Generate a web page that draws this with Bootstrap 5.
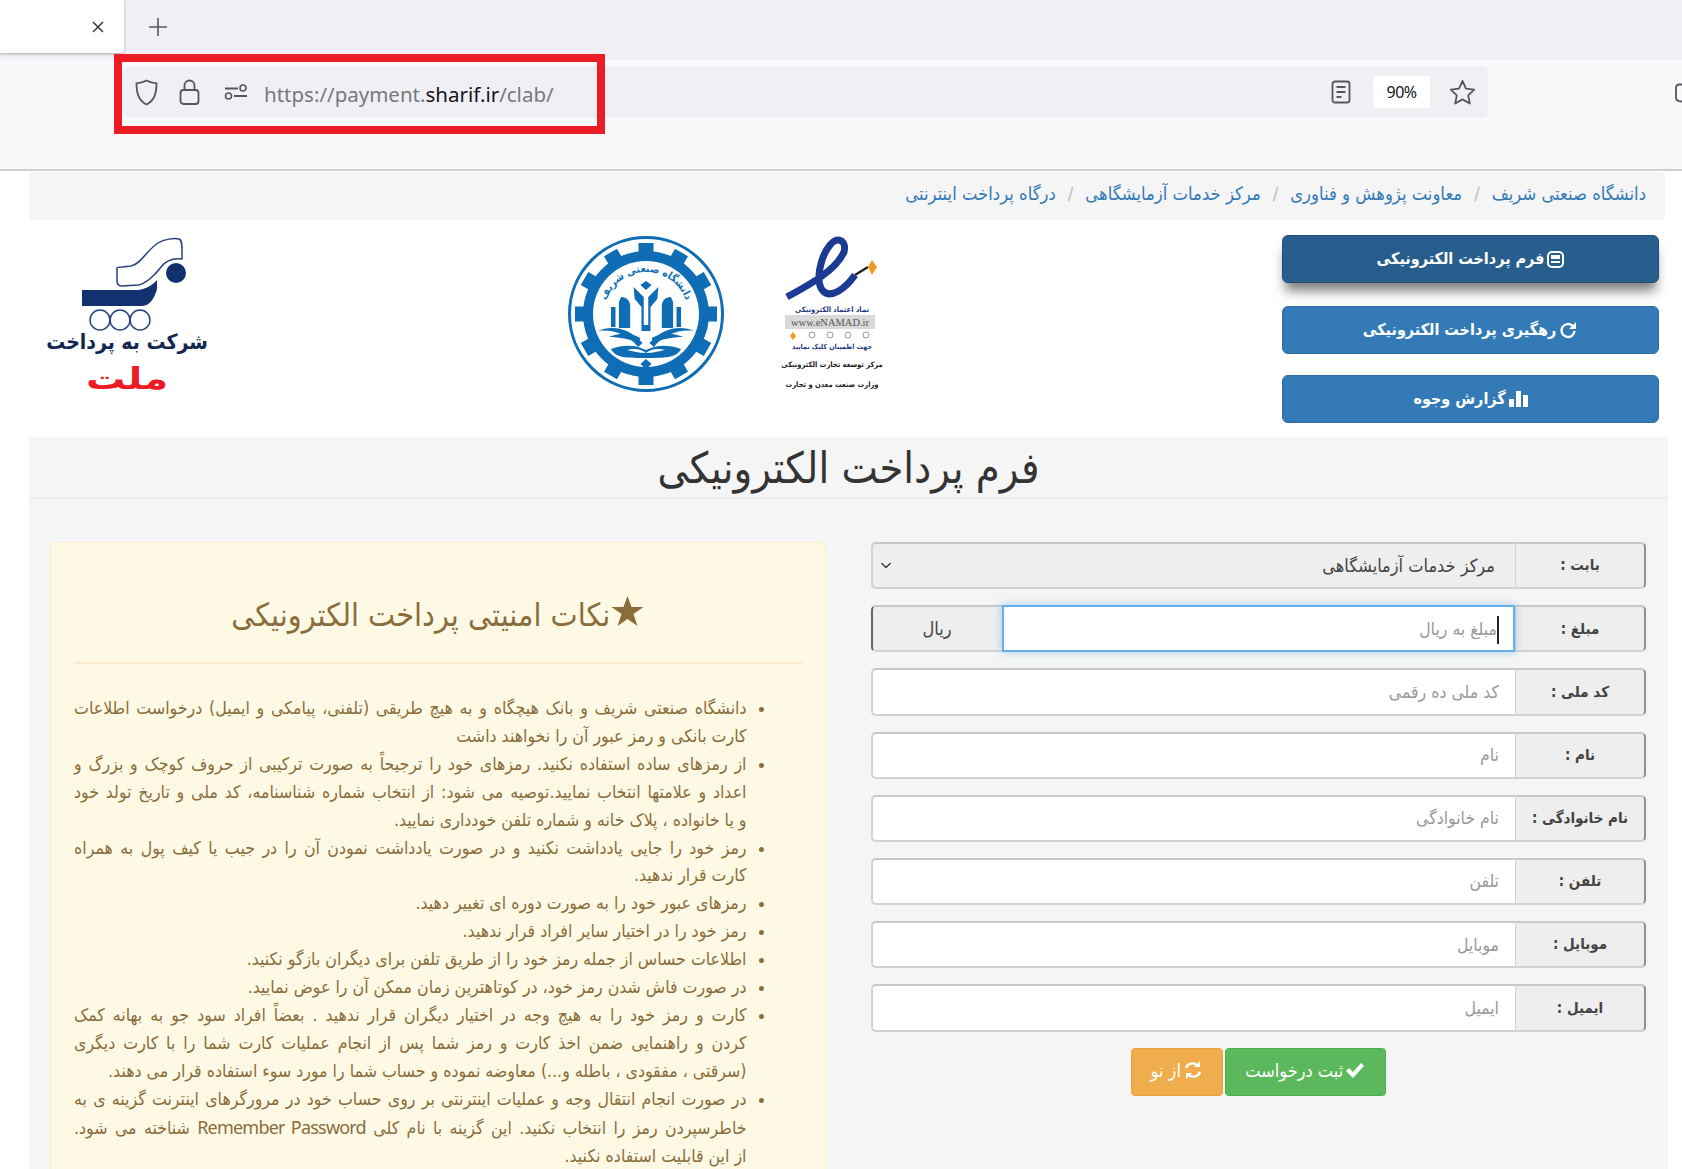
<!DOCTYPE html>
<html lang="fa">
<head>
  <meta charset="UTF-8" />
  <meta name="viewport" content="width=device-width, initial-scale=1.0"/>
  <title>فرم پرداخت الکترونیکی</title>
  <link href="https://cdn.jsdelivr.net/npm/bootstrap@5.3.0/dist/css/bootstrap.min.css" rel="stylesheet"/>
  <style>
    html, body { height: 100%; overflow: hidden; background: #fff; }
    body { font-family: "DejaVu Sans Condensed", "DejaVu Sans", sans-serif; font-stretch: condensed; font-size: 15px; color: #555; }

    /* browser chrome */
    .tab-strip { height: 60px; background: #f0f0f4; }
    .tab-active { width: 124px; height: 53px; background: #fff; border-bottom-right-radius: 4px; box-shadow: 0 1px 3px rgba(0,0,0,.3); padding-right: 19px; }
    .tab-new { width: 68px; height: 53px; }
    .tool-bar { height: 111px; background: #f9f9fb; border-bottom: 2px solid #cfcfd2; padding: 6px 0 0 122px; }
    .url-bar { width: 1366px; height: 52px; background: #f0f0f4; border-radius: 6px; padding: 0 12px; }
    .url-text { font-family: "Noto Sans", "Open Sans", sans-serif; font-size: 20.5px; color: #77777f; margin-left: 16px; padding-top: 4px; }
    .url-text b { font-weight: 400; color: #15141a; }
    .zoom-pill { width: 57px; height: 32px; background: #fff; border-radius: 4px; font-family: "Noto Sans", sans-serif; font-size: 16px; letter-spacing: -.6px; color: #15141a; margin: 0 19px 0 22px; }
    .red-frame { position: absolute; left: 114px; top: 54px; width: 491px; height: 80px; border: 8px solid #ed1c24; }
    .side-icon { position: absolute; right: 0; top: 83px; }
    .icon-shield { margin-right: 20px; }
    .icon-lock { margin-right: 24px; }

    .page-wrap { padding: 1px 14px 0 29px; }
    .crumb-bar { height: 48px; background: #f5f5f5; border-radius: 4px; margin: 0 3px 0 0; padding: 0 19px; }
    .crumb-bar .breadcrumb-item { font-size: 18.3px; line-height: 1; padding-bottom: 3px; }
    .crumb-bar .breadcrumb-item a { color: #337ab7; text-decoration: none; }
    .crumb-bar .breadcrumb-item + .breadcrumb-item { padding-left: 0; padding-right: 12px; }
    .crumb-bar .breadcrumb-item + .breadcrumb-item::before { float: right; padding-right: 0; padding-left: 12px; color: #bbb; }

    /* logos and side menu */
    .head-row { height: 217px; padding-right: 9px; }
    .pay-menu { width: 377px; padding-top: 15px; }
    .menu-btn { display: flex; align-items: center; justify-content: center; gap: 3px; width: 100%; height: 48px; margin-bottom: 21px; background: #337ab7; border: 1px solid #2e6da4; color: #fff; font-size: 16px; font-weight: 700; }
    .menu-btn:hover { background: #337ab7; color: #fff; }
    .menu-btn.is-current { margin-bottom: 23px; background: #285e8e; border-color: #204d74; box-shadow: 0 11px 12px -3px rgba(0,0,0,.5); }
    .seal-enamad { margin: 17px 404px 0 0; width: 93px; height: 156px; overflow: visible; }
    .seal-sharif { margin: 15px 60px 0 0; width: 158px; height: 158px; }
    .seal-mellat { margin: 17px auto 0 17px; width: 162px; height: 153px; overflow: visible; }

    /* main panel */
    .main-panel { height: 740px; background: #f5f5f5; overflow: hidden; }
    .panel-head { height: 62px; padding-top: 3px; border-bottom: 2px solid #ededed; }
    .panel-head h2 { font-size: 43px; font-weight: 400; color: #333; margin: 0; }
    .panel-col { padding: 43px 22px 0 22px; }
    .panel-col.is-tips { padding: 43px 23px 0 21px; }

    .pay-group { height: 47.2px; margin-bottom: 16px; }
    .input-group.pay-group > * { margin: 0 !important; font-size: 15px; border: 2px solid #d2d2d2; border-top-color: #c8c8c8; border-radius: 0 !important; }
    .input-group.pay-group > .pay-label { width: 131px; justify-content: center; background: #eee; color: #444; font-weight: 700; border-left-width: 1px; border-top-right-radius: 5px !important; border-bottom-right-radius: 5px !important; border-right-color: #8f8f8f; }
    .input-group.pay-group > .form-control,
    .input-group.pay-group > .form-select { border-right: 0; border-top-left-radius: 5px !important; border-bottom-left-radius: 5px !important; padding: 0 16px 0 0; font-size: 17.5px; color: #444; box-shadow: none; }
    .input-group.pay-group > .form-control::placeholder { color: #999; }
    .input-group.pay-group > .form-select { padding-right: 20px; font-size: 18px; background-color: #eee; opacity: 1; background-position: left 6px center; background-size: 14px 11px; }
    .input-group.pay-group > .form-control.has-focus { border: 2px solid #66afe9; border-radius: 0 !important; box-shadow: 0 0 8px rgba(102,175,233,.6); z-index: 3; }
    .input-group.pay-group > .unit-label { width: 131px; justify-content: center; background: #eee; color: #444; font-size: 18px; border-right: 0; border-top-left-radius: 5px !important; border-bottom-left-radius: 5px !important; border-left-color: #666; }
    .input-group.pay-group > .text-caret { position: absolute; right: 147px; top: 11px; width: 2px; height: 28px; padding: 0; background: #222; border: 0; z-index: 4; }

    .act-row { gap: 2px; }
    .act-btn { height: 48px; display: flex; align-items: center; justify-content: center; gap: 2px; padding: 0 0 3px; color: #fff; font-size: 18px; font-weight: 400; border-radius: 4px; }
    .act-send { width: 161px; background: #5cb85c; border-color: #4cae4c; }
    .act-reset { width: 92px; background: #f0ad4e; border-color: #eea236; }
    .act-send:hover { background: #5cb85c; color: #fff; }
    .act-reset:hover { background: #f0ad4e; color: #fff; }

    .tips-box { height: 700px; margin: 0; padding: 24px 23px; background: #fef9e5; border: 1px solid #faebcc; border-radius: 5px; color: #8a6d3b; }
    .tips-title { display: flex; align-items: flex-start; justify-content: center; gap: 1px; margin: 29px 0 0; font-size: 32px; font-weight: 400; height: 66px; color: #8a6d3b; }
    .tips-rule { margin: 0 0 31px; border: 0; border-top: 2px solid #faebcc; opacity: 1; }
    .tips-list { margin: 0; padding: 0 55px 0 0; font-size: 17.6px; line-height: 27.9px; }
    .tip-line { display: block; white-space: nowrap; }
    .tip-line.is-full { text-align: justify; text-align-last: justify; }
    .tips-list bdi { font-family: "Noto Sans", sans-serif; font-size: 18px; letter-spacing: -.8px; }
    .seal-text { font-family: "DejaVu Sans Condensed", "DejaVu Sans", sans-serif; }
  </style>
</head>
<body>
  <!-- نوار مرورگر -->
  <header class="position-relative">
    <div class="tab-strip d-flex align-items-start">
      <div class="tab-active d-flex align-items-center justify-content-end">
        <svg width="14" height="14" viewBox="0 0 14 14"><path d="M2 2l10 10M12 2L2 12" stroke="#3a3a3f" stroke-width="1.5" fill="none"/></svg>
      </div>
      <div class="tab-new d-flex align-items-center justify-content-center">
        <svg width="20" height="20" viewBox="0 0 20 20"><path d="M10 1v18M1 10h18" stroke="#55555b" stroke-width="1.6" fill="none"/></svg>
      </div>
    </div>
    <div class="tool-bar">
      <div class="url-bar d-flex align-items-center">
        <svg width="25" height="27" viewBox="0 0 25 27" class="icon-shield"><path d="M12.500 1.500c3 1.800 6 2.600 10 2.800 0 10-2 17-10 21.200C4.500 21.300 2.500 14.300 2.500 4.300c4-.2 7-1 10-2.800z" fill="none" stroke="#55555b" stroke-width="1.800"/></svg>
        <svg width="21" height="26" viewBox="0 0 21 26" class="icon-lock"><rect x="1.500" y="11" width="18" height="14" rx="3" fill="none" stroke="#55555b" stroke-width="1.800"/><path d="M5.500 11V6.500a5 5 0 0 1 10 0V11" fill="none" stroke="#55555b" stroke-width="1.800"/></svg>
        <svg width="24" height="16" viewBox="0 0 24 16"><path d="M1 4.500h13M10 12h13" stroke="#55555b" stroke-width="1.800"/><circle cx="19" cy="4" r="3" fill="none" stroke="#55555b" stroke-width="1.600"/><circle cx="4.500" cy="12" r="3" fill="none" stroke="#55555b" stroke-width="1.600"/></svg>
        <span class="url-text">https://payment.<b>sharif.ir</b>/clab/</span>
        <span class="flex-grow-1"></span>
        <svg width="20" height="24" viewBox="0 0 20 24"><rect x="1.500" y="1.500" width="17" height="21" rx="2.500" fill="none" stroke="#55555b" stroke-width="1.800"/><path d="M5.500 7h9M5.500 12h9M5.500 17h5" stroke="#55555b" stroke-width="1.800"/></svg>
        <span class="zoom-pill d-flex align-items-center justify-content-center">90%</span>
        <svg width="27" height="26" viewBox="0 0 27 26"><path d="M13.500 2l3.500 7.600 8.200 1-6 5.700 1.600 8.200-7.300-4.100-7.300 4.100 1.600-8.200-6-5.700 8.200-1z" fill="none" stroke="#55555b" stroke-width="1.800" stroke-linejoin="round"/></svg>
      </div>
    </div>
    <div class="red-frame"></div>
    <svg class="side-icon" width="7" height="20" viewBox="0 0 7 20"><path d="M7 1.500H4a3 3 0 0 0-3 3v10c0 2 2 4 6 4" fill="none" stroke="#55555b" stroke-width="1.800"/></svg>
  </header>

  <div class="page-wrap" dir="rtl">
    <nav class="crumb-bar d-flex align-items-center">
      <ol class="breadcrumb mb-0">
        <li class="breadcrumb-item"><a href="#">دانشگاه صنعتی شریف</a></li>
        <li class="breadcrumb-item"><a href="#">معاونت پژوهش و فناوری</a></li>
        <li class="breadcrumb-item"><a href="#">مرکز خدمات آزمایشگاهی</a></li>
        <li class="breadcrumb-item"><a href="#">درگاه پرداخت اینترنتی</a></li>
      </ol>
    </nav>

    <div class="head-row d-flex align-items-start">
      <div class="pay-menu">
        <a href="#" class="btn menu-btn is-current">
          <svg width="17" height="17" viewBox="0 0 17 17"><rect x="1" y="1" width="15" height="15" rx="4" fill="none" stroke="#fff" stroke-width="2"/><rect x="4" y="4" width="9" height="4" fill="#fff"/><path d="M4 11h9" stroke="#fff" stroke-width="2"/></svg>
          فرم پرداخت الکترونیکی
        </a>
        <a href="#" class="btn menu-btn">
          <svg width="19" height="19" viewBox="0 0 19 19"><path d="M15.500 10a6.500 6.500 0 1 1-2-5.200" fill="none" stroke="#fff" stroke-width="2.400"/><path d="M17 1v7h-7z" fill="#fff"/></svg>
          رهگیری پرداخت الکترونیکی
        </a>
        <a href="#" class="btn menu-btn">
          <svg width="19" height="16" viewBox="0 0 19 16"><path d="M0 8h5v8H0zM7 0h5v16H7zM14 4h5v12h-5z" fill="#fff"/></svg>
          گزارش وجوه
        </a>
      </div>

      <svg class="seal-enamad" viewBox="0 0 93 156">
        <path d="M2 60C20 50 50 35 59 15 62 3 52-1 45 8 35 20 30 45 38 54c8 8 22-2 32-16" fill="none" stroke="#1a3a94" stroke-width="7"/>
        <path d="M70 38l13-8" stroke="#222" stroke-width="2.500"/>
        <path d="M87 23l5 7-5 8-4-8z" fill="#f29a1d"/>
        <text class="seal-text" x="47" y="75" text-anchor="middle" font-size="7.500" font-weight="700" fill="#25397f">نماد اعتماد الکترونیکی</text>
        <rect x="0" y="78" width="90" height="14" fill="#d9d9d9"/>
        <text x="45" y="89" text-anchor="middle" font-family="Liberation Serif, serif" font-size="10.500" fill="#555">www.eNAMAD.ir</text>
        <path d="M8 95l3 4-3 4-3-4z" fill="#f29a1d"/>
        <g fill="none" stroke="#9a9a9a" stroke-width="1"><circle cx="27" cy="98" r="3"/><circle cx="45" cy="98" r="3"/><circle cx="63" cy="98" r="3"/><circle cx="81" cy="98" r="3"/></g>
        <text class="seal-text" x="47" y="112" text-anchor="middle" font-size="7" font-weight="700" fill="#25397f">جهت اطمینان کلیک نمایید</text>
        <text class="seal-text" x="47" y="130" text-anchor="middle" font-size="7.500" font-weight="700" fill="#222">مرکز توسعه تجارت الکترونیکی</text>
        <text class="seal-text" x="47" y="150" text-anchor="middle" font-size="7.500" font-weight="700" fill="#222">وزارت صنعت معدن و تجارت</text>
      </svg>

      <svg class="seal-sharif" viewBox="0 0 158 158">
        <circle cx="79" cy="79" r="76.500" fill="#fff" stroke="#0f6db5" stroke-width="3"/>
        <g stroke="#0f6db5" stroke-width="15">
          <path d="M79 8v142M8 79h142M43.500 17.500l71 123M17.500 43.500l123 71M17.500 114.500l123-71M43.500 140.500l71-123"/>
        </g>
        <circle cx="79" cy="79" r="63" fill="#0f6db5"/>
        <circle cx="79" cy="79" r="53" fill="#fff"/>
        <path id="sharifArc" d="M37 79a42 42 0 0 1 84 0" fill="none"/>
        <text class="seal-text" font-size="10.500" fill="#0f6db5" font-weight="700"><textPath href="#sharifArc" startOffset="50%" text-anchor="middle">دانشگاه صنعتی شریف</textPath></text>
        <g fill="#0f6db5" transform="translate(79 0) scale(1.13 1) translate(-79 0)">
          <path d="M79 46l5 4-5 5-5-5z"/>
          <path d="M68 52l9 10v28h4V62l9-10-1 12-6 8v24h-8V72l-6-8z"/>
          <path d="M57 62c5 0 8 4 8 9v22h-10V67zM101 62c-5 0-8 4-8 9v22h10V67zM48 72h4v20h-4zM106 72h4v20h-4z"/>
          <path d="M76 108C64 92 48 90 36 96c14-2 28 4 36 16zM82 108c12-16 28-18 40-12-14-2-28 4-36 16z"/>
          <path d="M74 103C64 97 54 98 46 102c10 0 20 2 26 7zM84 103c10-6 20-5 28-1-10 0-20 2-26 7z"/>
          <path d="M48 114c12-5 22-4 31 1 9-5 19-6 31-1-4 8-10 9-31 9s-27-1-31-9z"/>
          <path d="M79 124l5 5-5 5-5-5z"/>
        </g>
        <path d="M60 115c8-2 14-1 19 3 5-4 11-5 19-3-6 1-12 3-19 3s-13-2-19-3z" fill="#fff"/>
      </svg>

      <svg class="seal-mellat" viewBox="0 0 162 153">
        <path d="M71 31q0-1 5-1l9-1C95 27 100 14 112 6c6-4 16-5 21-4 3 1 3 6 3 12v8c-8-1-15 0-21 8-5 7-15 17-23 18l-16 1c-4 0-5-2-5-5z" fill="#fff" stroke="#26427e" stroke-width="1.500" stroke-linejoin="round"/>
        <circle cx="130" cy="36" r="10" fill="#12326f"/>
        <path d="M36 53h56c8-1 15-5 19-10v9c-2 8-7 17-15 17H36z" fill="#12326f"/>
        <g fill="none" stroke="#26427e" stroke-width="1.500"><circle cx="54" cy="83" r="10"/><circle cx="74" cy="83" r="10"/><circle cx="94" cy="83" r="10"/></g>
        <text class="seal-text" x="81" y="112" text-anchor="middle" font-size="21" font-weight="700" fill="#12264f">شرکت به پرداخت</text>
        <text class="seal-text" x="81" y="152" text-anchor="middle" font-size="30" font-weight="700" fill="#ed1c24" textLength="82" lengthAdjust="spacingAndGlyphs">ملت</text>
      </svg>
    </div>

    <main class="main-panel">
      <div class="panel-head d-flex align-items-center justify-content-center">
        <h2>فرم پرداخت الکترونیکی</h2>
      </div>

      <div class="row g-0">
        <div class="col-6 panel-col">
          <form id="formPay">
            <div class="input-group pay-group">
              <span class="input-group-text pay-label">بابت :</span>
              <select class="form-select" disabled><option>مرکز خدمات آزمایشگاهی</option></select>
            </div>
            <div class="input-group pay-group">
              <span class="input-group-text pay-label">مبلغ :</span>
              <input type="text" class="form-control has-focus" placeholder="مبلغ به ریال"/>
              <span class="input-group-text unit-label">ریال</span>
              <span class="text-caret"></span>
            </div>
            <div class="input-group pay-group">
              <span class="input-group-text pay-label">کد ملی :</span>
              <input type="text" class="form-control" placeholder="کد ملی ده رقمی"/>
            </div>
            <div class="input-group pay-group">
              <span class="input-group-text pay-label">نام :</span>
              <input type="text" class="form-control" placeholder="نام"/>
            </div>
            <div class="input-group pay-group">
              <span class="input-group-text pay-label">نام خانوادگی :</span>
              <input type="text" class="form-control" placeholder="نام خانوادگی"/>
            </div>
            <div class="input-group pay-group">
              <span class="input-group-text pay-label">تلفن :</span>
              <input type="text" class="form-control" placeholder="تلفن"/>
            </div>
            <div class="input-group pay-group">
              <span class="input-group-text pay-label">موبایل :</span>
              <input type="text" class="form-control" placeholder="موبایل"/>
            </div>
            <div class="input-group pay-group">
              <span class="input-group-text pay-label">ایمیل :</span>
              <input type="text" class="form-control" placeholder="ایمیل"/>
            </div>
            <div class="d-flex justify-content-center act-row">
              <button type="button" class="btn act-btn act-send">
                <svg width="20" height="17" viewBox="0 0 20 17"><path d="M1 9l3-3 4 4 8-9 3 3-11 12z" fill="#fff"/></svg>
                ثبت درخواست
              </button>
              <button type="button" class="btn act-btn act-reset">
                <svg width="20" height="20" viewBox="0 0 20 20"><path d="M3 8a7 7 0 0 1 11-3M17 12a7 7 0 0 1-11 3" fill="none" stroke="#fff" stroke-width="2.400"/><path d="M17 1v6h-6zM3 19v-6h6z" fill="#fff"/></svg>
                از نو
              </button>
            </div>
          </form>
        </div>

        <div class="col-6 panel-col is-tips">
          <div class="alert alert-warning tips-box">
            <h3 class="tips-title">
              <svg width="33" height="30" viewBox="0 0 32 30"><path d="M16 0l4 11h12l-10 7 4 12-10-7-10 7 4-12L0 11h12z" fill="#8a6d3b"/></svg>
              <span>نکات امنیتی پرداخت الکترونیکی</span>
            </h3>
            <hr class="tips-rule"/>
            <ul class="tips-list">
              <li>
                <span class="tip-line is-full">دانشگاه صنعتی شریف و بانک هیچگاه و به هیچ طریقی (تلفنی، پیامکی و ایمیل) درخواست اطلاعات</span>
                <span class="tip-line">کارت بانکی و رمز عبور آن را نخواهند داشت</span>
              </li>
              <li>
                <span class="tip-line is-full">از رمزهای ساده استفاده نکنید. رمزهای خود را ترجیحاً به صورت ترکیبی از حروف کوچک و بزرگ و</span>
                <span class="tip-line is-full">اعداد و علامتها انتخاب نمایید.توصیه می شود: از انتخاب شماره شناسنامه، کد ملی و تاریخ تولد خود</span>
                <span class="tip-line">و یا خانواده ، پلاک خانه و شماره تلفن خودداری نمایید.</span>
              </li>
              <li>
                <span class="tip-line is-full">رمز خود را جایی یادداشت نکنید و در صورت یادداشت نمودن آن را در جیب یا کیف پول به همراه</span>
                <span class="tip-line">کارت قرار ندهید.</span>
              </li>
              <li><span class="tip-line">رمزهای عبور خود را به صورت دوره ای تغییر دهید.</span></li>
              <li><span class="tip-line">رمز خود را در اختیار سایر افراد قرار ندهید.</span></li>
              <li><span class="tip-line">اطلاعات حساس از جمله رمز خود را از طریق تلفن برای دیگران بازگو نکنید.</span></li>
              <li><span class="tip-line">در صورت فاش شدن رمز خود، در کوتاهترین زمان ممکن آن را عوض نمایید.</span></li>
              <li>
                <span class="tip-line is-full">کارت و رمز خود را به هیچ وجه در اختیار دیگران قرار ندهید . بعضاً افراد سود جو به بهانه کمک</span>
                <span class="tip-line is-full">کردن و راهنمایی ضمن اخذ کارت و رمز شما پس از انجام عملیات کارت شما را با کارت دیگری</span>
                <span class="tip-line">(سرقتی ، مفقودی ، باطله و...) معاوضه نموده و حساب شما را مورد سوء استفاده قرار می دهند.</span>
              </li>
              <li>
                <span class="tip-line is-full">در صورت انجام انتقال وجه و عملیات اینترنتی بر روی حساب خود در مرورگرهای اینترنت گزینه ی به</span>
                <span class="tip-line is-full">خاطرسپردن رمز را انتخاب نکنید. این گزینه با نام کلی <bdi>Remember Password</bdi> شناخته می شود.</span>
                <span class="tip-line">از این قابلیت استفاده نکنید.</span>
              </li>
            </ul>
          </div>
        </div>
      </div>
    </main>
  </div>
  <script src="https://cdn.jsdelivr.net/npm/bootstrap@5.3.0/dist/js/bootstrap.bundle.min.js"></script>
</body>
</html>
